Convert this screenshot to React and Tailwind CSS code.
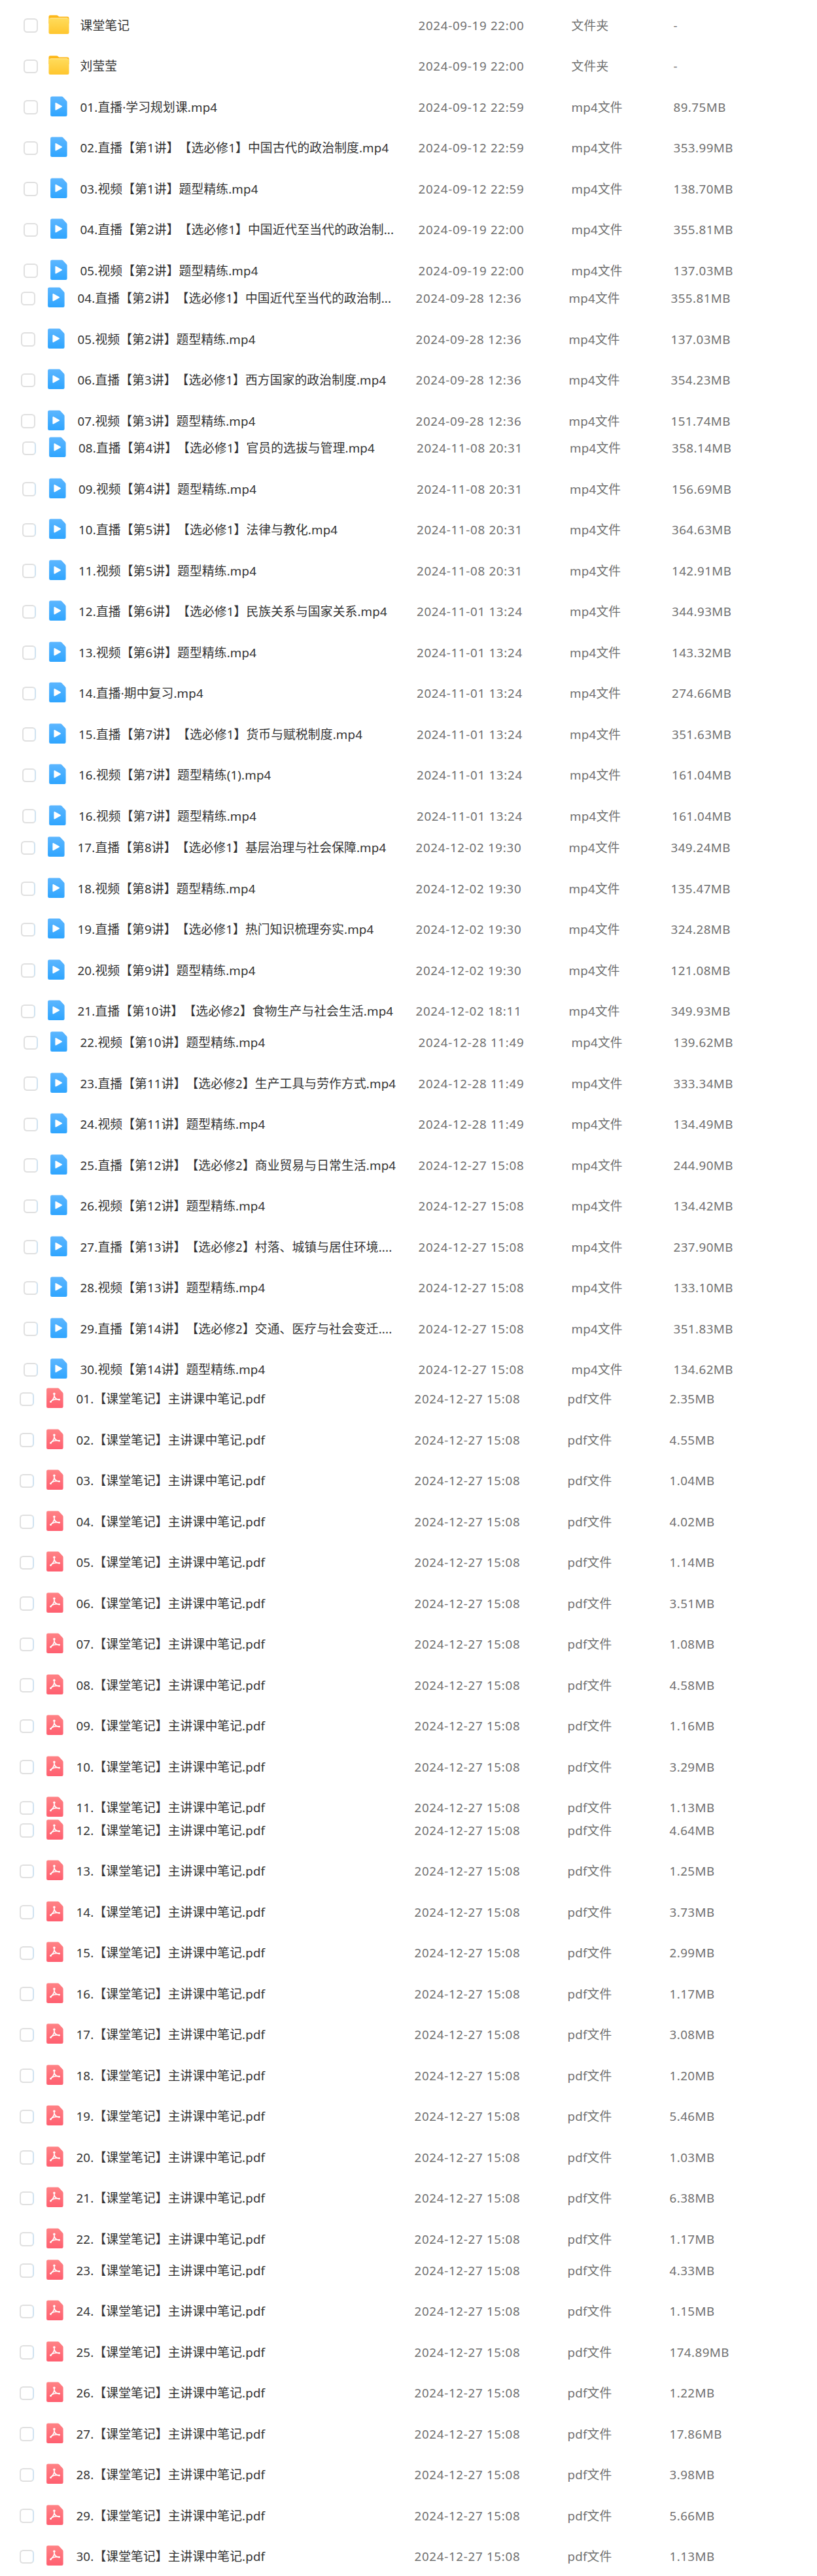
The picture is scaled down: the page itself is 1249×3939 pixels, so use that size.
import React from 'react';
import clsx from 'clsx';

const sections = [
    {
        className: 'pl-[36px]',
        rows: [
            ['folder', '课堂笔记', '2024-09-19 22:00', '-'],
            ['folder', '刘莹莹', '2024-09-19 22:00', '-'],
            ['mp4', '01.直播·学习规划课.mp4', '2024-09-12 22:59', '89.75MB'],
            ['mp4', '02.直播【第1讲】【选必修1】中国古代的政治制度.mp4', '2024-09-12 22:59', '353.99MB'],
            ['mp4', '03.视频【第1讲】题型精练.mp4', '2024-09-12 22:59', '138.70MB'],
            ['mp4', '04.直播【第2讲】【选必修1】中国近代至当代的政治制...', '2024-09-19 22:00', '355.81MB'],
            ['mp4', '05.视频【第2讲】题型精练.mp4', '2024-09-19 22:00', '137.03MB'],
        ],
    },
    {
        className: 'pl-[32px] -mt-[20px]',
        rows: [
            ['mp4', '04.直播【第2讲】【选必修1】中国近代至当代的政治制...', '2024-09-28 12:36', '355.81MB'],
            ['mp4', '05.视频【第2讲】题型精练.mp4', '2024-09-28 12:36', '137.03MB'],
            ['mp4', '06.直播【第3讲】【选必修1】西方国家的政治制度.mp4', '2024-09-28 12:36', '354.23MB'],
            ['mp4', '07.视频【第3讲】题型精练.mp4', '2024-09-28 12:36', '151.74MB'],
        ],
    },
    {
        className: 'pl-[33.5px] -mt-[21px]',
        tinted: true,
        rows: [
            ['mp4', '08.直播【第4讲】【选必修1】官员的选拔与管理.mp4', '2024-11-08 20:31', '358.14MB'],
            ['mp4', '09.视频【第4讲】题型精练.mp4', '2024-11-08 20:31', '156.69MB'],
            ['mp4', '10.直播【第5讲】【选必修1】法律与教化.mp4', '2024-11-08 20:31', '364.63MB'],
            ['mp4', '11.视频【第5讲】题型精练.mp4', '2024-11-08 20:31', '142.91MB'],
            ['mp4', '12.直播【第6讲】【选必修1】民族关系与国家关系.mp4', '2024-11-01 13:24', '344.93MB'],
            ['mp4', '13.视频【第6讲】题型精练.mp4', '2024-11-01 13:24', '143.32MB'],
            ['mp4', '14.直播·期中复习.mp4', '2024-11-01 13:24', '274.66MB'],
            ['mp4', '15.直播【第7讲】【选必修1】货币与赋税制度.mp4', '2024-11-01 13:24', '351.63MB'],
            ['mp4', '16.视频【第7讲】题型精练(1).mp4', '2024-11-01 13:24', '161.04MB'],
            ['mp4', '16.视频【第7讲】题型精练.mp4', '2024-11-01 13:24', '161.04MB'],
        ],
    },
    {
        className: 'pl-[32px] -mt-[14px]',
        tinted: true,
        rows: [
            ['mp4', '17.直播【第8讲】【选必修1】基层治理与社会保障.mp4', '2024-12-02 19:30', '349.24MB'],
            ['mp4', '18.视频【第8讲】题型精练.mp4', '2024-12-02 19:30', '135.47MB'],
            ['mp4', '19.直播【第9讲】【选必修1】热门知识梳理夯实.mp4', '2024-12-02 19:30', '324.28MB'],
            ['mp4', '20.视频【第9讲】题型精练.mp4', '2024-12-02 19:30', '121.08MB'],
            ['mp4', '21.直播【第10讲】【选必修2】食物生产与社会生活.mp4', '2024-12-02 18:11', '349.93MB'],
        ],
    },
    {
        className: 'pl-[36px] -mt-[14.5px]',
        tinted: true,
        rows: [
            ['mp4', '22.视频【第10讲】题型精练.mp4', '2024-12-28 11:49', '139.62MB'],
            ['mp4', '23.直播【第11讲】【选必修2】生产工具与劳作方式.mp4', '2024-12-28 11:49', '333.34MB'],
            ['mp4', '24.视频【第11讲】题型精练.mp4', '2024-12-28 11:49', '134.49MB'],
            ['mp4', '25.直播【第12讲】【选必修2】商业贸易与日常生活.mp4', '2024-12-27 15:08', '244.90MB'],
            ['mp4', '26.视频【第12讲】题型精练.mp4', '2024-12-27 15:08', '134.42MB'],
            ['mp4', '27.直播【第13讲】【选必修2】村落、城镇与居住环境....', '2024-12-27 15:08', '237.90MB'],
            ['mp4', '28.视频【第13讲】题型精练.mp4', '2024-12-27 15:08', '133.10MB'],
            ['mp4', '29.直播【第14讲】【选必修2】交通、医疗与社会变迁....', '2024-12-27 15:08', '351.83MB'],
            ['mp4', '30.视频【第14讲】题型精练.mp4', '2024-12-27 15:08', '134.62MB'],
        ],
    },
    {
        className: 'pl-[30px] -mt-[17.5px]',
        tinted: true,
        rows: notes(1, ['2.35', '4.55', '1.04', '4.02', '1.14', '3.51', '1.08', '4.58', '1.16', '3.29', '1.13']),
    },
    {
        className: 'pl-[30px] -mt-[28px]',
        tinted: true,
        rows: notes(12, ['4.64', '1.25', '3.73', '2.99', '1.17', '3.08', '1.20', '5.46', '1.03', '6.38', '1.17']),
    },
    {
        className: 'pl-[30px] -mt-[14.5px]',
        tinted: true,
        rows: notes(23, ['4.33', '1.15', '174.89', '1.22', '17.86', '3.98', '5.66', '1.13']),
    },
];

function notes(start, sizes) {
    return sizes.map((size, i) => [
        'pdf',
        `${String(start + i).padStart(2, '0')}.【课堂笔记】主讲课中笔记.pdf`,
        '2024-12-27 15:08',
        `${size}MB`,
    ]);
}

const typeLabels = { folder: '文件夹', mp4: 'mp4文件', pdf: 'pdf文件' };

function FolderIcon() {
    return (
        <svg width="32" height="32" viewBox="0 0 32 32" className="shrink-0">
            <path d="M.5 3.5Q.5 1.2 2.8 1.2H12.5Q13.8 1.2 14.8 2.2L16.2 3.4H29.2Q31.5 3.4 31.5 5.7V14H.5Z" fill="#fdb819" />
            <path d="M.5 8.6Q1 5.4 3.6 5.4H28.4Q31 5.4 31.5 8.6V27.7Q31.5 30 29.2 30H2.8Q.5 30 .5 27.7Z" fill="url(#folderFill)" />
            <path d="M2.5 6.6Q3 5.9 4 5.9H28Q29 5.9 29.5 6.6" stroke="#ffe9a3" strokeWidth="1" fill="none" />
        </svg>
    );
}

function Mp4Icon() {
    return (
        <svg width="32" height="32" viewBox="0 0 32 32" className="shrink-0">
            <path d="M5.4.5H20.4Q21.5.5 22.2 1.3L27.8 7.3Q28.6 8.2 28.6 9.3V28.7Q28.6 31 26.3 31H5.4Q3.1 31 3.1 28.7V2.8Q3.1.5 5.4.5Z" fill="url(#mp4Fill)" />
            <path d="M11.2 10.8V20.7L20.2 15.75Z" fill="#fff" stroke="#fff" strokeWidth="1.6" strokeLinejoin="round" />
        </svg>
    );
}

function PdfIcon() {
    return (
        <svg width="32" height="32" viewBox="0 0 32 32" className="shrink-0">
            <path d="M5.4.5H20.4Q21.5.5 22.2 1.3L27.8 7.3Q28.6 8.2 28.6 9.3V28.7Q28.6 31 26.3 31H5.4Q3.1 31 3.1 28.7V2.8Q3.1.5 5.4.5Z" fill="url(#pdfFill)" />
            <g fill="none" stroke="#fff" strokeWidth="1.6" strokeLinecap="round" strokeLinejoin="round">
                <path d="M14.9 9V12.8Q14.8 16.6 9.2 21.8" />
                <path d="M15 13Q16.2 17.6 22.6 18.3" />
                <path d="M11 19.6Q15.4 17.2 20 17.8" />
            </g>
            <g fill="#fff">
                <circle cx="14.9" cy="9.3" r="1.7" />
                <circle cx="9.6" cy="21.4" r="1.4" />
                <circle cx="22.4" cy="18.2" r="1.4" />
            </g>
        </svg>
    );
}

const icons = { folder: FolderIcon, mp4: Mp4Icon, pdf: PdfIcon };

function FileRow({ row, tinted }) {
    const [type, name, date, size] = row;
    const Icon = icons[type];
    return (
        <div className="flex h-[62.5px] items-center">
            <span
                className={clsx(
                    'h-[21.5px] w-[21.5px] shrink-0 rounded-[5.5px] border-2 border-[#e0e0e0]',
                    tinted && 'border-r-[#cfe2f0]'
                )}
            />
            <span className="ml-[16.5px] -mt-[2px] shrink-0">
                <Icon />
            </span>
            <span className="ml-[16.5px] w-[517px] shrink-0 tracking-[0.14px] text-[#333]">{name}</span>
            <span className="w-[234px] shrink-0 tracking-[0.7px]">{date}</span>
            <span className="w-[156px] shrink-0 tracking-[0.2px]">{typeLabels[type]}</span>
            <span className="shrink-0 tracking-[0.45px]">{size}</span>
        </div>
    );
}

export default function App() {
    return (
        <div className="h-[3939px] w-full overflow-hidden whitespace-nowrap bg-white pt-[7.5px] font-['Noto_Sans','Noto_Sans_CJK_SC',sans-serif] text-[18.75px] leading-[26px] text-[#707070] [text-spacing-trim:space-all]">
            <svg width="0" height="0" className="absolute">
                <defs>
                    <linearGradient id="folderFill" x1="0" y1="0" x2="0" y2="1">
                        <stop offset="0" stopColor="#ffdc5c" />
                        <stop offset="1" stopColor="#ffc62e" />
                    </linearGradient>
                    <linearGradient id="mp4Fill" x1="0" y1="0" x2="0" y2="1">
                        <stop offset="0" stopColor="#5cb6ff" />
                        <stop offset="1" stopColor="#2fa5ff" />
                    </linearGradient>
                    <linearGradient id="pdfFill" x1="0" y1="0" x2="0" y2="1">
                        <stop offset="0" stopColor="#ff8285" />
                        <stop offset="1" stopColor="#ff5f70" />
                    </linearGradient>
                </defs>
            </svg>
            {sections.map((section, i) => (
                <div key={i} className={section.className}>
                    {section.rows.map((row, j) => (
                        <FileRow key={j} row={row} tinted={section.tinted} />
                    ))}
                </div>
            ))}
        </div>
    );
}
